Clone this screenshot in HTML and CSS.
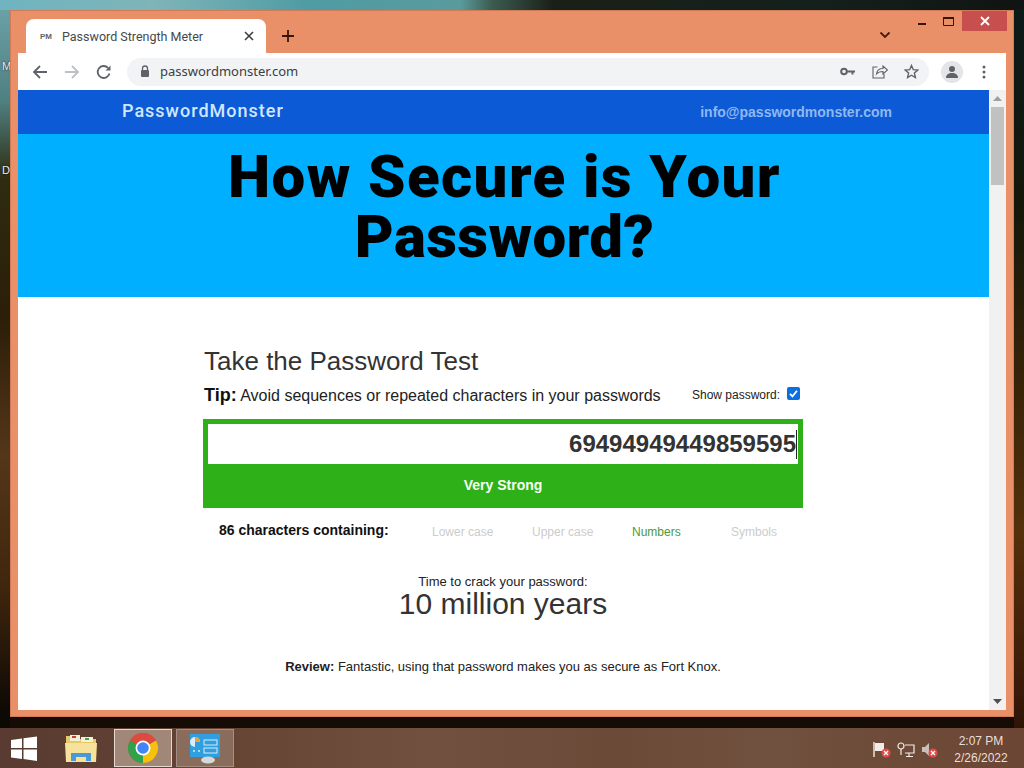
FILE: index.html
```html
<!DOCTYPE html>
<html lang="en">
<head>
<meta charset="utf-8">
<title>Password Strength Meter</title>
<link rel="stylesheet" href="styles.css">
</head>
<body>
<div class="desktop">
  <span class="desk-label desk-m">M</span>
  <span class="desk-label desk-d">D</span>
  <div class="window">
    <div class="tabstrip">
      <div class="tab">
        <span class="favicon">PM</span>
        <span class="tab-title">Password Strength Meter</span>
        <svg class="tab-close" width="10" height="10" viewBox="0 0 10 10"><path d="M1 1l8 8M9 1l-8 8" stroke="#3c4043" stroke-width="1.6"/></svg>
      </div>
      <svg class="newtab" width="12" height="12" viewBox="0 0 12 12"><path d="M6 0v12M0 6h12" stroke="#3a1408" stroke-width="1.8"/></svg>
      <div class="strip-fill"></div>
      <svg class="tabsearch" width="12" height="8" viewBox="0 0 12 8"><path d="M1.5 1.5L6 6l4.500-4.500" fill="none" stroke="#4a1a08" stroke-width="1.800"/></svg>
      <div class="caption">
        <span class="cap-btn cap-min"><svg width="10" height="4" viewBox="0 0 10 4"><path d="M1 2h8" stroke="#3a1408" stroke-width="2"/></svg></span>
        <span class="cap-btn"><svg width="11" height="9" viewBox="0 0 11 9"><path d="M.5 1.500h10v7H.5z" fill="none" stroke="#3a1408"/><path d="M0 1h11" stroke="#3a1408" stroke-width="2"/></svg></span>
        <span class="cap-close"><svg width="10" height="10" viewBox="0 0 10 10"><path d="M1 1l8 8M9 1l-8 8" stroke="#fff" stroke-width="1.800"/></svg></span>
      </div>
    </div>
    <div class="toolbar">
      <svg class="nav-icon" width="16" height="16" viewBox="0 0 16 16"><path d="M15 8H2M8 2L2 8l6 6" fill="none" stroke="#5f6368" stroke-width="1.800"/></svg>
      <svg class="nav-icon" width="16" height="16" viewBox="0 0 16 16"><path d="M1 8h13M8 2l6 6-6 6" fill="none" stroke="#bdc1c6" stroke-width="1.800"/></svg>
      <svg class="nav-icon" width="16" height="16" viewBox="0 0 16 16"><path d="M13.500 9.500A6 6 0 1 1 12 3.800" fill="none" stroke="#5f6368" stroke-width="1.800"/><path d="M14.500 1.500v5h-5z" fill="#5f6368"/></svg>
      <div class="omnibox">
        <svg width="10" height="13" viewBox="0 0 10 13"><path d="M2.500 5V3.500a2.500 2.500 0 0 1 5 0V5" fill="none" stroke="#5f6368" stroke-width="1.300"/><rect x="1" y="5" width="8" height="7" rx="1" fill="#5f6368"/></svg>
        <span class="url">passwordmonster.com</span>
        <span class="omni-icons">
          <svg width="15" height="9" viewBox="0 0 15 9"><circle cx="4" cy="4.500" r="2.800" fill="none" stroke="#5f6368" stroke-width="2"/><path d="M7 3.500h8v2h-1.500v2h-2v-2H7z" fill="#5f6368"/></svg>
          <svg width="16" height="15" viewBox="0 0 16 15"><path d="M5.500 3H1v11h11v-4" fill="none" stroke="#5f6368" stroke-width="1.100"/><path d="M4.500 10c.5-3.500 3-5.500 6.500-5.500V2l4.500 4-4.500 4V7.500c-2.500 0-5 .8-6.500 2.500z" fill="none" stroke="#5f6368" stroke-width="1.100"/></svg>
          <svg width="15" height="15" viewBox="0 0 15 15"><path d="M7.500 1.500l1.800 4.200 4.500.4-3.400 3 1 4.400-3.900-2.300-3.900 2.300 1-4.400-3.400-3 4.500-.4z" fill="none" stroke="#5f6368" stroke-width="1.400"/></svg>
        </span>
      </div>
      <span class="avatar"><svg width="14" height="14" viewBox="0 0 14 14"><circle cx="7" cy="4" r="3" fill="#5f6368"/><path d="M1 13c0-3.500 2.500-5 6-5s6 1.500 6 5z" fill="#5f6368"/></svg></span>
      <svg class="kebab" width="4" height="14" viewBox="0 0 4 14"><circle cx="2" cy="2" r="1.500" fill="#5f6368"/><circle cx="2" cy="7" r="1.500" fill="#5f6368"/><circle cx="2" cy="12" r="1.500" fill="#5f6368"/></svg>
    </div>
    <div class="viewport">
      <main class="page">
        <header class="site-nav">
          <span class="brand">PasswordMonster</span>
          <span class="mail">info@passwordmonster.com</span>
        </header>
        <section class="hero"><h1>How Secure is Your<br><span class="hero-second">Password?</span></h1></section>
        <section class="test">
          <h2>Take the Password Test</h2>
          <div class="tip-row">
            <p class="tip"><b>Tip:</b> Avoid sequences or repeated characters in your passwords</p>
            <label class="show">Show password: <span class="check"><svg width="13" height="13" viewBox="0 0 13 13"><rect width="13" height="13" rx="2" fill="#0b6fe0"/><path d="M3 6.800l2.500 2.500L10 3.800" fill="none" stroke="#fff" stroke-width="1.800"/></svg></span></label>
          </div>
          <div class="meter">
            <div class="field"><span class="pw">69494949449859595</span><span class="caret"></span></div>
            <div class="verdict">Very Strong</div>
          </div>
          <div class="contains">
            <b class="count">86 characters containing:</b>
            <span class="kind k1">Lower case</span>
            <span class="kind k2">Upper case</span>
            <span class="kind k3 on">Numbers</span>
            <span class="kind k4">Symbols</span>
          </div>
          <p class="crack-label">Time to crack your password:</p>
          <p class="crack-time">10 million years</p>
          <p class="review"><b>Review:</b> Fantastic, using that password makes you as secure as Fort Knox.</p>
        </section>
      </main>
      <div class="scrollbar">
        <svg class="sb-arrow" width="9" height="5" viewBox="0 0 9 5"><path d="M4.500 0L9 5H0z" fill="#a0a0a0"/></svg>
        <div class="sb-thumb"></div>
        <div class="sb-track"></div>
        <svg class="sb-arrow" width="9" height="5" viewBox="0 0 9 5"><path d="M0 0h9L4.500 5z" fill="#505050"/></svg>
      </div>
    </div>
  </div>
  <footer class="taskbar">
    <svg class="winlogo" width="28" height="25" viewBox="0 0 28 25"><path d="M1 4l11-1.500V12H1zM13.500 2.300L27 .5V12H13.500zM1 13.500h11V23L1 21.500zM13.500 13.500H27V25l-13.500-2z" fill="#fff"/></svg>
    <span class="task-item">
      <svg width="34" height="32" viewBox="0 0 34 32"><path d="M2 4h12l2 3h16v22H2z" fill="#e8c868"/><rect x="6" y="3" width="10" height="6" fill="#f4f0d8"/><rect x="17" y="5" width="12" height="5" fill="#f4f0d8"/><rect x="8" y="4" width="4" height="2" fill="#c84030"/><rect x="21" y="6" width="4" height="2" fill="#48a048"/><path d="M1 11h32l-1 19H2z" fill="#f6e29a"/><path d="M7 29v-8h20v8h-5v-4H12v4z" fill="#4a9ad8"/></svg>
    </span>
    <span class="task-item task-active">
      <svg width="32" height="32" viewBox="0 0 32 32"><circle cx="16" cy="16" r="15" fill="#dd4b3e"/><path d="M16 16L29 8.500A15 15 0 0 1 16 31z" fill="#f4c20d"/><path d="M16 16v15A15 15 0 0 1 3 8.500z" fill="#2fa24a"/><path d="M3 8.500A15 15 0 0 1 29 8.500H16z" fill="#dd4b3e"/><circle cx="16" cy="16" r="7.500" fill="#fff"/><circle cx="16" cy="16" r="5.800" fill="#4285f4"/></svg>
    </span>
    <span class="task-item task-open">
      <svg width="34" height="32" viewBox="0 0 34 32"><rect x="2" y="2" width="30" height="23" fill="#2f9fe0"/><path d="M7 15a5 5 0 1 1 5-5H7z" fill="#d9ecf8"/><path d="M7 10V5a5 5 0 0 1 5 5z" fill="#f0a030"/><rect x="16" y="8" width="13" height="5" fill="none" stroke="#d9ecf8"/><rect x="16" y="16" width="13" height="5" fill="none" stroke="#d9ecf8"/><circle cx="6" cy="19" r="1" fill="#d9ecf8"/><circle cx="11" cy="19" r="1" fill="#d9ecf8"/><ellipse cx="20" cy="28" rx="7" ry="3.500" fill="#d8d8d8"/></svg>
    </span>
    <div class="task-fill"></div>
    <div class="tray">
      <svg width="18" height="16" viewBox="0 0 18 16"><path d="M1 0v15" stroke="#f4ece6" stroke-width="1.400"/><path d="M2 1h9v8H2z" fill="#f4ece6"/><circle cx="13" cy="11" r="4.500" fill="#e24a4a"/><path d="M11 9l4 4M15 9l-4 4" stroke="#fff" stroke-width="1.200"/></svg>
      <svg width="18" height="16" viewBox="0 0 18 16"><circle cx="4" cy="4" r="3" fill="none" stroke="#f4ece6" stroke-width="1.200"/><path d="M4 7v6M8 3h9v8H8M12 11v3M9 14.500h7" fill="none" stroke="#f4ece6" stroke-width="1.200"/></svg>
      <svg width="18" height="16" viewBox="0 0 18 16"><path d="M1 5h3l4-4v13l-4-4H1z" fill="#c8c0b8"/><circle cx="12" cy="11" r="4.500" fill="#e24a4a"/><path d="M10 9l4 4M14 9l-4 4" stroke="#fff" stroke-width="1.200"/></svg>
    </div>
    <div class="clock"><span>2:07 PM</span><span>2/26/2022</span></div>
  </footer>
</div>
</body>
</html>
```
FILE: styles.css
```css
* { box-sizing: border-box; }
html, body { margin: 0; padding: 0; }
body { width: 1024px; height: 768px; overflow: hidden; font-family: "Liberation Sans", Arial, sans-serif; }
p, h1, h2 { margin: 0; font-weight: normal; }

.desktop {
  position: relative; width: 1024px; height: 768px; display: flex; flex-direction: column; justify-content: flex-end;
  background-color: #150c06;
  background-repeat: no-repeat;
  background-image:
    linear-gradient(90deg, #6fb4c0 0, #7fb4b8 15%, #4f9ca4 30%, #5a9a9c 45%, #3c5c50 48%, #1a2018 54%, #14201c 80%, #101412 100%),
    linear-gradient(180deg, #6aa0a6 0, #4f7f80 12%, #2e2c10 22%, #2c1e08 40%, #54361a 58%, #40260e 75%, #0c0804 92%),
    linear-gradient(180deg, #0c1a1a 0, #141808 25%, #3a2408 50%, #55300c 68%, #3c1a08 88%, #1e0e06 100%);
  background-size: 100% 10px, 10px 100%, 10px 100%;
  background-position: 0 0, 0 10px, 100% 10px;
}
.desk-label { position: absolute; left: 2px; font-size: 11px; color: #f0f0f0; text-shadow: 0 0 2px #000; width: 8px; overflow: hidden; }
.desk-m { top: 60px; }
.desk-d { top: 164px; }

.window {
  position: absolute; left: 10px; top: 10px; width: 1004px; height: 707px;
  background: #e99068; border: 1px solid #d07a58; padding: 0 7px 6px 7px;
  display: flex; flex-direction: column;
}
.tabstrip { height: 42px; display: flex; align-items: flex-start; flex: none; }
.tab {
  width: 240px; height: 34px; margin: 8px 0 0 8px; background: #fff; border-radius: 8px 8px 0 0;
  display: flex; align-items: center; padding: 0 11px 0 14px;
}
.favicon { font-size: 8px; font-weight: bold; color: #5f6368; width: 22px; flex: none; }
.tab-title { font-family: Roboto, sans-serif; font-size: 12.5px; color: #45494d; flex: 1; white-space: nowrap; }
.tab-close { flex: none; margin-right: 1px; }
.newtab { margin: 19px 0 0 16px; flex: none; }
.strip-fill { flex: 1; }
.tabsearch { margin: 20px 18px 0 0; flex: none; }
.caption { display: flex; align-items: flex-start; flex: none; margin-right: -1px; }
.cap-btn { width: 26.5px; height: 20px; display: flex; align-items: center; justify-content: center; }
.cap-min { padding-top: 6px; }
.cap-close { width: 45px; height: 20px; background: #c7504f; display: flex; align-items: center; justify-content: center; }

.toolbar { height: 37px; background: #fff; display: flex; align-items: center; flex: none; padding: 0 20px 0 14px; }
.nav-icon { flex: none; margin-right: 16px; }
.omnibox {
  flex: 1; height: 28px; border-radius: 14px; background: #f1f3f4; display: flex; align-items: center;
  padding: 0 10px 0 13px; margin-left: -1px; gap: 10px;
}
.url { font-family: "Noto Sans", sans-serif; font-size: 13px; line-height: 16px; margin-top: -2px; color: #3c4043; flex: 1; }
.omni-icons { display: flex; align-items: center; gap: 16.5px; }
.avatar { width: 22px; height: 22px; border-radius: 50%; background: #e3e5e8; margin: 0 19px 0 12px; display: flex; align-items: center; justify-content: center; flex: none; }
.kebab { flex: none; }

.viewport { flex: 1; display: flex; min-height: 0; background: #fff; }
.page { flex: 1; min-width: 0; overflow: hidden; }
.site-nav { height: 44px; background: #0d5ad6; padding: 0 97px 0 104px; display: flex; align-items: center; justify-content: space-between; }
.brand { font-family: Roboto, sans-serif; font-weight: 500; font-size: 18px; letter-spacing: 1px; color: #cfe8ff; margin-top: -4px; }
.mail { font-weight: bold; font-size: 14px; color: #8fb8f0; }
.hero { height: 163px; background: #00afff; padding: 13px 0 0 2px; text-align: center; }
.hero h1 { font-family: Roboto, sans-serif; font-weight: 900; font-size: 60px; line-height: 60px; letter-spacing: 1.400px; color: #000; }
.hero-second { letter-spacing: .4px; }

.test { width: 600px; margin: 0 0 0 185px; padding-top: 47px; color: #222; }
.test h2 { font-size: 26px; line-height: 34px; color: #333; padding-left: 1px; }
.tip-row { display: flex; justify-content: space-between; align-items: center; padding: 0 3px 0 1px; margin-top: 5px; height: 24px; }
.tip { font-size: 16px; color: #222; }
.tip b { font-size: 18px; color: #111; }
.show { display: flex; align-items: center; gap: 7px; font-size: 12px; color: #222; }
.check { display: block; height: 13px; margin-top: -4px; }
.meter { margin-top: 12px; height: 89px; background: #2db018; padding: 5px; }
.field { height: 40px; background: #fff; display: flex; align-items: center; justify-content: flex-end; padding-right: 1px; }
.pw { font-weight: bold; font-size: 24px; color: #333; }
.caret { width: 1px; height: 29px; background: #222; }
.verdict { text-align: center; font-weight: bold; font-size: 14px; color: #f6fff2; margin-top: 13px; }
.contains { display: flex; align-items: center; height: 44px; font-size: 12px; color: #ccc; padding-left: 16px; }
.count { font-size: 14px; color: #111; width: 213px; flex: none; }
.kind { flex: none; margin-top: 4px; }
.k1 { width: 100px; }
.k2 { width: 100px; }
.k3 { width: 99px; }
.on { color: #4a9a3a; }
.crack-label { text-align: center; font-size: 13px; margin-top: 23px; line-height: 14px; color: #222; }
.crack-time { text-align: center; font-size: 30px; line-height: 30px; color: #333; }
.review { text-align: center; font-size: 13px; margin-top: 40px; color: #222; }
.review b { color: #222; }

.scrollbar { width: 17px; background: #f1f1f1; display: flex; flex-direction: column; align-items: center; flex: none; }
.sb-arrow { flex: none; margin: 6px 0; }
.sb-thumb { width: 13px; height: 78px; background: #c1c1c1; flex: none; }
.sb-track { flex: 1; }

.taskbar {
  height: 40px; display: flex; align-items: center; flex: none; padding-left: 10px;
  background: linear-gradient(90deg, #583a30 0, #684636 25%, #725040 42%, #6c4a38 60%, #70503e 75%, #6c4634 100%);
}
.winlogo { flex: none; margin-right: 14px; }
.task-item { width: 58px; height: 38px; display: flex; align-items: center; justify-content: center; margin-right: 4px; flex: none; }
.task-active { background: #a18777; border: 1px solid #e4d8d0; }
.task-open { background: #8a6c5c; border: 1px solid #a58e80; }
.task-fill { flex: 1; }
.tray { display: flex; gap: 6px; align-items: center; margin: 3px 10px 0 0; }
.clock { width: 62px; margin: 3px 12px 0 1px; display: flex; flex-direction: column; align-items: center; font-size: 12px; line-height: 17px; color: #eadfd8; }
```
